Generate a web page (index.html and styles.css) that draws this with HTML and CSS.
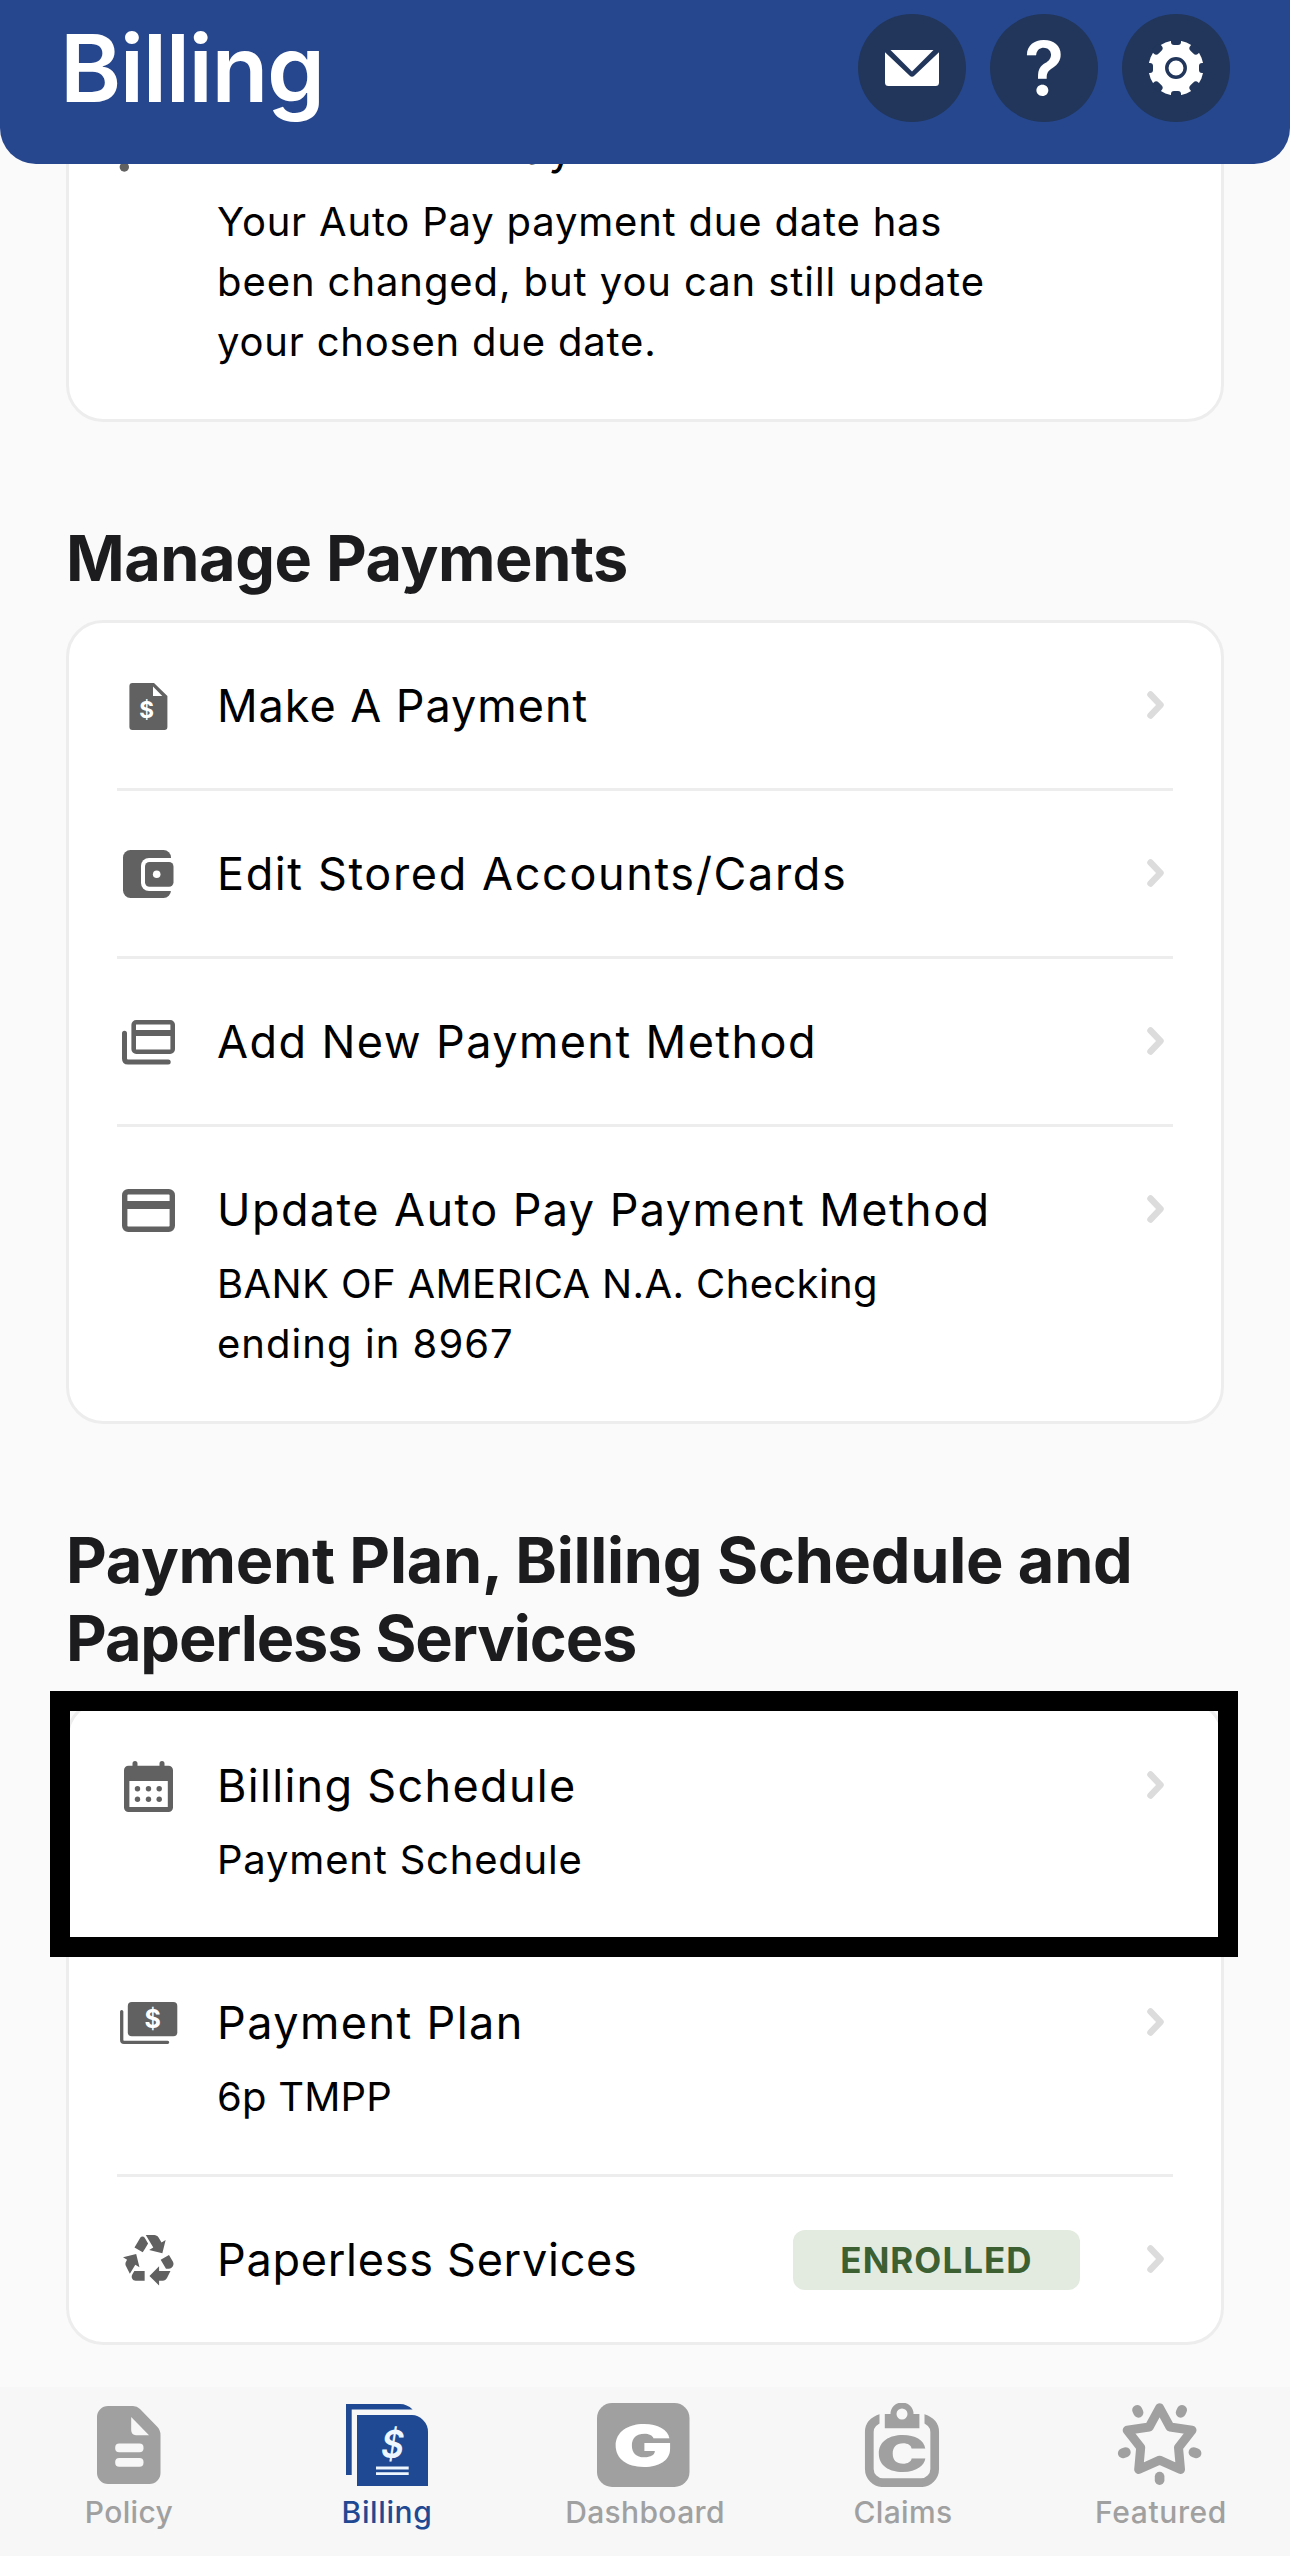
FILE: index.html
```html
<!DOCTYPE html>
<html lang="en">
<head>
<meta charset="utf-8">
<title>Billing</title>
<link rel="stylesheet" href="styles.css">
</head>
<body>
<svg class="sprite" aria-hidden="true">
  <symbol id="chevron" viewBox="0 0 17 28"><path d="M3.5 3.5 13.5 14 3.5 24.5" fill="none" stroke="#dcdcdc" stroke-width="6.500" stroke-linecap="round" stroke-linejoin="round"/></symbol>
</svg>

<header class="header">
  <h1 class="header-title">Billing</h1>
  <div class="actions">
    <button class="action" aria-label="Messages">
      <svg width="54" height="36" viewBox="0 0 54 36"><path d="M0 2.200 24.500 25.500Q27 28 29.500 25.500L54 2.200V32.500A3.500 3.500 0 0 1 50.500 36H3.500A3.500 3.500 0 0 1 0 32.500Z" fill="#fff"/><path d="M5.500 0H48.500L27 21.500Z" fill="#fff"/></svg>
    </button>
    <button class="action action-help" aria-label="Help">?</button>
    <button class="action" aria-label="Settings">
      <svg width="56" height="56" viewBox="-28 -28 56 56">
        <circle r="27.500" fill="#fff"/>
        <g fill="#21365a">
          <rect x="-5" y="-30" width="10" height="7" rx="3"/>
          <rect x="-5.500" y="-30" width="11" height="7.500" rx="3.500" transform="rotate(45)"/>
          <rect x="-5" y="-30" width="10" height="7" rx="3" transform="rotate(90)"/>
          <rect x="-5.500" y="-30" width="11" height="7.500" rx="3.500" transform="rotate(135)"/>
          <rect x="-5" y="-30" width="10" height="7" rx="3" transform="rotate(180)"/>
          <rect x="-5.500" y="-30" width="11" height="7.500" rx="3.500" transform="rotate(225)"/>
          <rect x="-5" y="-30" width="10" height="7" rx="3" transform="rotate(270)"/>
          <rect x="-5.500" y="-30" width="11" height="7.500" rx="3.500" transform="rotate(315)"/>
        </g>
        <circle r="9.200" fill="none" stroke="#21365a" stroke-width="3.500"/>
      </svg>
    </button>
  </div>
</header>

<main class="content">
  <section class="card">
    <div class="row">
      <svg class="icon" viewBox="0 0 62 62"><circle cx="7.300" cy="51" r="4.700"/></svg>
      <div class="text">
        <div class="title t-wide">Reschedule Payment</div>
        <p class="sub"><span class="t-due">Your Auto Pay payment due date has</span><br><span class="t-chg">been changed, but you can still update</span><br><span class="t-due">your chosen due date.</span></p>
      </div>
    </div>
  </section>

  <h2 class="heading t-manage">Manage Payments</h2>
  <section class="card">
    <div class="row">
      <svg class="icon" viewBox="0 0 62 62"><path d="M15.400 9H37L50.400 22V53a3 3 0 0 1-3 3H15.400a3 3 0 0 1-3-3V12a3 3 0 0 1 3-3Z"/><path d="M36 12.500V22H45.300Z" fill="#fff"/><text class="dollar" x="29.700" y="44" font-size="22.500">$</text></svg>
      <div class="text"><div class="title t-make">Make A Payment</div></div>
      <svg class="chevron"><use href="#chevron"/></svg>
    </div>
    <div class="row">
      <svg class="icon" viewBox="0 0 62 62"><rect x="6" y="8" width="48" height="48" rx="7.500"/><rect x="24" y="16" width="38" height="33" rx="8" fill="#fff"/><rect x="28" y="20" width="28.500" height="24.700" rx="4.500"/><circle cx="39.700" cy="32.200" r="3.800" fill="#fff"/></svg>
      <div class="text"><div class="title t-edit">Edit Stored Accounts/Cards</div></div>
      <svg class="chevron"><use href="#chevron"/></svg>
    </div>
    <div class="row">
      <svg class="icon" viewBox="0 0 62 62"><path class="line" d="M7.500 23.200V48.500Q7.500 52 11 52H51.200" stroke-width="5"/><rect class="line" x="16.700" y="12.300" width="39" height="29.400" rx="2.500" stroke-width="4.600"/><rect x="16" y="20" width="40" height="6"/></svg>
      <div class="text"><div class="title t-add">Add New Payment Method</div></div>
      <svg class="chevron"><use href="#chevron"/></svg>
    </div>
    <div class="row">
      <svg class="icon" viewBox="0 0 62 62"><rect class="line" x="7.700" y="13.700" width="47.600" height="37.600" rx="3.500" stroke-width="5.400"/><rect x="7" y="23" width="49" height="8"/></svg>
      <div class="text">
        <div class="title t-add">Update Auto Pay Payment Method</div>
        <p class="sub"><span class="t-bank">BANK OF AMERICA N.A. Checking</span><br><span class="t-end">ending in 8967</span></p>
      </div>
      <svg class="chevron"><use href="#chevron"/></svg>
    </div>
  </section>

  <h2 class="heading"><span class="t-plan">Payment Plan, Billing Schedule and</span><br><span class="t-paper">Paperless Services</span></h2>
  <section class="card">
    <div class="row row-marked">
      <svg class="icon" viewBox="0 0 62 62"><path fill-rule="evenodd" d="M11.500 11.700H51.500A4.500 4.500 0 0 1 56 16.200V53.500A4.500 4.500 0 0 1 51.500 58H11.500A4.500 4.500 0 0 1 7 53.500V16.200A4.500 4.500 0 0 1 11.500 11.700ZM12.400 27V53H50.800V27Z"/><path class="line" d="M18 9.500V14M45 9.500V14" stroke-width="5"/><circle cx="20.500" cy="34.800" r="2.700"/><circle cx="31.500" cy="34.800" r="2.700"/><circle cx="42.200" cy="34.800" r="2.700"/><circle cx="20.500" cy="45.300" r="2.700"/><circle cx="31.500" cy="45.300" r="2.700"/><circle cx="42.200" cy="45.300" r="2.700"/></svg>
      <div class="text">
        <div class="title t-wide">Billing Schedule</div>
        <p class="sub t-due">Payment Schedule</p>
      </div>
      <svg class="chevron"><use href="#chevron"/></svg>
    </div>
    <div class="row">
      <svg class="icon" viewBox="0 0 62 62"><path class="line" d="M4.700 20.600V49Q4.700 51.300 7 51.300H50.600" stroke-width="3.300"/><rect x="10.800" y="11" width="49.500" height="34.200" rx="4"/><text class="dollar" x="35.600" y="37.400" font-size="25">$</text></svg>
      <div class="text">
        <div class="title t-add">Payment Plan</div>
        <p class="sub t-six">6p TMPP</p>
      </div>
      <svg class="chevron"><use href="#chevron"/></svg>
    </div>
    <div class="row">
      <svg class="icon" viewBox="0 0 62 62"><path transform="translate(3.600 2.200) scale(2.405)" d="M5.770 7.150 7.200 4.780l1.030-1.710c.39-.65 1.330-.65 1.720 0l1.480 2.460-1.230 2.060-1 1.620-3.430-2.060zM21.720 12.970l-1.600-2.660-3.460 2L18.870 16H20c.76 0 1.450-.43 1.790-1.110.14-.28.21-.58.21-.89 0-.36-.1-.71-.28-1.030zM16 21h1.500c.76 0 1.450-.43 1.790-1.110L20.740 17H16v-2l-4 4 4 4v-2zM10 17H5.700l-.84 1.410c-.3.5-.32 1.120-.06 1.650.28.57.87.94 1.520.94H10v-4zM6.120 14.350l1.730 1.040L6.480 9.900 1 11.270l1.700 1.020-.41.69c-.35.59-.38 1.310-.07 1.920l1.630 3.260 2.270-3.810zM17.020 5.140l-1.300-2.170C15.350 2.370 14.700 2 14 2h-3.530l3.120 5.200-1.720 1.030 5.490 1.370 1.370-5.490-1.710 1.030z"/></svg>
      <div class="text"><div class="title t-less">Paperless Services</div></div>
      <span class="badge">ENROLLED</span>
      <svg class="chevron"><use href="#chevron"/></svg>
    </div>
  </section>
</main>

<nav class="tabs">
  <a class="tab">
    <svg class="tab-icon" viewBox="0 0 96 84"><path d="M27 3H52Q56 3 59 6L76 23.500Q79.500 27 79.500 32V70A11 11 0 0 1 68.500 81H27A11 11 0 0 1 16 70V14A11 11 0 0 1 27 3Z"/><path d="M50.200 14 68 32.200H55Q50.200 32 50.200 27Z" fill="#f7f7f7"/><rect x="34.200" y="40.600" width="28.300" height="8.700" rx="4" fill="#f7f7f7"/><rect x="34.200" y="55" width="28.300" height="8.700" rx="4" fill="#f7f7f7"/></svg>
    <span class="t-tab1">Policy</span>
  </a>
  <a class="tab tab-active">
    <svg class="tab-icon" viewBox="0 0 96 84"><path d="M7 1H61Q68 1 73.600 6.500H12.700V72H7Z"/><path d="M18 12H73Q79 12 84 17T89 29V83H18Z"/><text class="tab-dollar" x="53.500" y="55" font-size="38" textLength="23" lengthAdjust="spacingAndGlyphs">$</text><path d="M37 65H69.700M37 70.700H69.700" stroke="#eef6ff" stroke-width="2.800"/></svg>
    <span class="t-tab2">Billing</span>
  </a>
  <a class="tab">
    <svg class="tab-icon" viewBox="0 0 96 84"><rect width="92.500" height="84" rx="15"/><text class="logo-letter" x="16" y="62.500" font-size="56.500" textLength="60" lengthAdjust="spacingAndGlyphs" fill="#fff">G</text></svg>
    <span class="t-tab1">Dashboard</span>
  </a>
  <a class="tab">
    <svg class="tab-icon" viewBox="0 0 96 84"><path class="line" d="M26.500 15.200Q14.300 19 14.300 29V66A13.700 13.700 0 0 0 28 79.700H66A13.700 13.700 0 0 0 79.700 66V29Q79.700 19 67.500 15.200" stroke-width="8.700" stroke-linecap="butt"/><rect x="24.500" y="7" width="45" height="20" fill="#f7f7f7"/><path fill-rule="evenodd" d="M29.800 11H35.500A11.500 11.500 0 0 1 58.500 11H64.400V25.200H29.800ZM47 5.500A5.500 5.500 0 0 0 47 16.500 5.500 5.500 0 0 0 47 5.500Z"/><text class="logo-letter" x="21.500" y="67.800" font-size="48" textLength="51" lengthAdjust="spacingAndGlyphs">C</text></svg>
    <span class="t-tab1">Claims</span>
  </a>
  <a class="tab">
    <svg class="tab-icon" viewBox="0 0 96 84"><path class="line" stroke-width="9" d="M46.600 4.800 57 24 79 27.200 65.500 44.500 67.500 66.500 46.600 57.200 25.700 66.500 27.700 44.500 14.200 27.200 36.200 24Z"/><rect x="-5" y="-6.500" width="10" height="13" rx="5" transform="translate(24.800 8.300) rotate(-25)"/><rect x="-5" y="-6.500" width="10" height="13" rx="5" transform="translate(68.400 8.300) rotate(25)"/><rect x="-5" y="-6.500" width="10" height="13" rx="5" transform="translate(11.300 49.700) rotate(72)"/><rect x="-5" y="-6.500" width="10" height="13" rx="5" transform="translate(82 49.700) rotate(-72)"/><rect x="41.800" y="68.800" width="9.600" height="13.200" rx="4.800"/></svg>
    <span class="t-tab2">Featured</span>
  </a>
</nav>
</body>
</html>
```

FILE: styles.css
```css
* { box-sizing: border-box; }

body {
  margin: 0;
  height: 2556px;
  display: flex;
  flex-direction: column;
  overflow: hidden;
  background: #fafafa;
  font-family: Inter, "Liberation Sans", sans-serif;
  color: #000;
}

h1, h2, p { margin: 0; }
.sprite { display: none; }

/* Header */
.header {
  flex: none;
  z-index: 1;
  height: 164px;
  padding: 12px 60px 0;
  display: flex;
  justify-content: space-between;
  align-items: flex-start;
  background: #26478e;
  border-radius: 0 0 36px 36px;
}
.header-title {
  font-size: 93px;
  font-weight: 600;
  line-height: 112px;
  letter-spacing: -1.43px;
  color: #fff;
}
.actions { display: flex; gap: 24px; padding-top: 2px; }
.action {
  width: 108px;
  height: 108px;
  padding: 0;
  border: 0;
  border-radius: 50%;
  display: flex;
  align-items: center;
  justify-content: center;
  background: #21365a;
}
.action-help {
  font: 600 74px/108px Inter, sans-serif;
  color: #fff;
}

/* The list is scrolled: its first card starts beneath the header */
.content {
  flex: 1;
  min-height: 0;
  margin-top: -102px;
  padding: 0 66px;
}
.card {
  background: #fff;
  border: 3px solid #ededed;
  border-radius: 37px;
  padding: 0 48px;
}
.row {
  display: flex;
  align-items: flex-start;
  padding: 53px 0 52px;
}
.row + .row { border-top: 3px solid #ededed; }
.icon {
  flex: none;
  width: 62px;
  height: 62px;
  margin: -2px 38px 0 0;
  fill: #616161;
  stroke: none;
}
.line {
  fill: none;
  stroke: #616161;
  stroke-linecap: round;
}
.dollar {
  fill: #fff;
  font-weight: 700;
  text-anchor: middle;
}
.text { flex: 1; white-space: nowrap; }
.title { font-size: 45px; line-height: 60px; }
.sub { margin: 14px 0 -5px; font-size: 40px; line-height: 60px; }
.chevron {
  flex: none;
  width: 17px;
  height: 28px;
  margin: 15px 9px 0 67px;
}
.badge {
  width: 287px;
  height: 60px;
  border-radius: 12px;
  background: #e3ebe0;
  color: #3d6033;
  font-size: 35px;
  font-weight: 700;
  line-height: 60px;
  letter-spacing: 1.04px;
  text-align: center;
}
.heading {
  margin: 97px 0 23px;
  font-size: 63px;
  font-weight: 700;
  line-height: 78px;
  color: #1c1c1e;
  white-space: nowrap;
}

/* Thick frame round the selected row */
.row-marked { position: relative; }
.row-marked::after {
  content: "";
  position: absolute;
  inset: -12px -65px -20px -67px;
  border: 20px solid #000;
}

/* Tab bar */
.tabs {
  flex: none;
  height: 169px;
  padding-top: 16px;
  display: grid;
  grid-template-columns: repeat(5, 1fr);
  background: #f7f7f7;
}
.tab {
  display: flex;
  flex-direction: column;
  align-items: center;
  gap: 7px;
  font-size: 30px;
  font-weight: 500;
  line-height: 36px;
  color: #a0a0a0;
}
.tab-active { color: #1f4992; }
.tab-icon { width: 96px; height: 84px; fill: currentColor; }
.tab-icon .line { stroke: currentColor; stroke-linejoin: round; }
.tab-dollar {
  fill: #eef6ff;
  font-weight: 600;
  font-style: italic;
  text-anchor: middle;
}
.logo-letter { font-weight: 900; }

/* Tracking */
.t-due { letter-spacing: .8px; }
.t-chg { letter-spacing: .92px; }
.t-manage { letter-spacing: -.47px; }
.t-plan { letter-spacing: -.29px; }
.t-paper { letter-spacing: -1.14px; }
.t-make { letter-spacing: .95px; }
.t-edit { letter-spacing: 1.62px; }
.t-add { letter-spacing: 1.42px; }
.t-wide { letter-spacing: 1.31px; }
.t-less { letter-spacing: .73px; }
.t-bank { letter-spacing: .38px; }
.t-end { letter-spacing: 1.05px; }
.t-six { letter-spacing: .2px; }
.t-tab1 { letter-spacing: .35px; }
.t-tab2 { letter-spacing: .6px; }
```
